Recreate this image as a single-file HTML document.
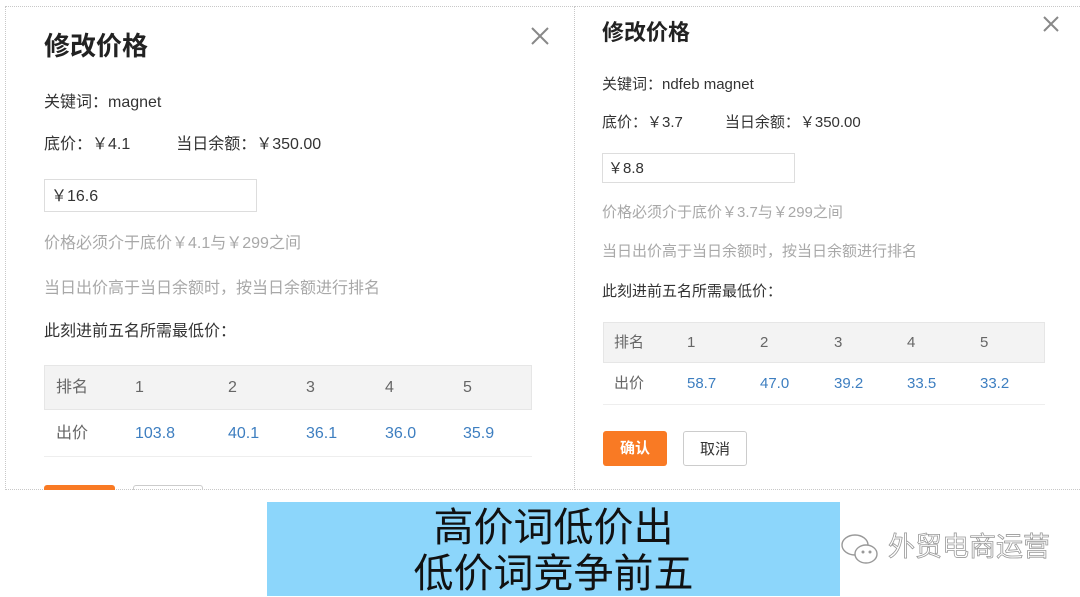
<!DOCTYPE html>
<html><head><meta charset="utf-8"><style>
*{margin:0;padding:0;box-sizing:border-box}
body{width:1080px;height:596px;background:#fff;position:relative;overflow:hidden;font-family:"Liberation Sans","Noto Sans CJK SC",sans-serif;color:#333}
.a{position:absolute;white-space:nowrap;line-height:1}
.g{color:#a8a8a8}
.b{color:#3d7ec0}
.panel{position:absolute;border:1px dotted #c8c8c8;overflow:hidden;background:#fff}
.x{position:absolute}
</style></head><body>
<div class="panel" style="left:5px;top:6px;width:570px;height:484px;border-right:none"></div>
<div class="panel" style="left:574px;top:6px;width:510px;height:484px;border-right:none"></div>

<!-- left -->
<div class="a" style="left:44px;top:33px;font-size:26px;font-weight:bold;color:#222">修改价格</div>
<svg class="x" style="left:530px;top:26px" width="20" height="20"><path d="M2 2L18 18M18 2L2 18" stroke="#888" stroke-width="2"/></svg>
<div class="a" style="left:44px;top:95px;font-size:16px">关键词：magnet</div>
<div class="a" style="left:44px;top:137px;font-size:16px">底价：￥4.1<span style="margin-left:46px">当日余额：￥350.00</span></div>
<div class="a" style="left:44px;top:179px;width:213px;height:33px;border:1px solid #ddd;font-size:16px;padding:9px 6px">￥16.6</div>
<div class="a g" style="left:44px;top:236px;font-size:16px">价格必须介于底价￥4.1与￥299之间</div>
<div class="a g" style="left:44px;top:281px;font-size:16px">当日出价高于当日余额时，按当日余额进行排名</div>
<div class="a" style="left:44px;top:324px;font-size:16px">此刻进前五名所需最低价：</div>
<div class="a" style="left:44px;top:365px;width:488px;height:45px;background:#f3f3f3;border:1px solid #e6e6e6"></div>
<div class="a" style="left:44px;top:456px;width:488px;height:1px;background:#eee"></div>
<div class="a" style="left:56px;top:380px;font-size:16px;color:#666">排名</div>
<div class="a" style="left:135px;top:380px;font-size:16px;color:#666">1</div>
<div class="a" style="left:228px;top:380px;font-size:16px;color:#666">2</div>
<div class="a" style="left:306px;top:380px;font-size:16px;color:#666">3</div>
<div class="a" style="left:385px;top:380px;font-size:16px;color:#666">4</div>
<div class="a" style="left:463px;top:380px;font-size:16px;color:#666">5</div>
<div class="a" style="left:56px;top:426px;font-size:16px;color:#666">出价</div>
<div class="a b" style="left:135px;top:426px;font-size:16px">103.8</div>
<div class="a b" style="left:228px;top:426px;font-size:16px">40.1</div>
<div class="a b" style="left:306px;top:426px;font-size:16px">36.1</div>
<div class="a b" style="left:385px;top:426px;font-size:16px">36.0</div>
<div class="a b" style="left:463px;top:426px;font-size:16px">35.9</div>
<div class="a" style="left:44px;top:485px;width:71px;height:5px;background:#f97a24;border-radius:3px 3px 0 0"></div>
<div class="a" style="left:133px;top:485px;width:70px;height:5px;border:1px solid #ccc;border-bottom:none;border-radius:3px 3px 0 0"></div>

<!-- right -->
<div class="a" style="left:602px;top:22px;font-size:22px;font-weight:bold;color:#222">修改价格</div>
<svg class="x" style="left:1042px;top:15px" width="18" height="18"><path d="M2 2L16 16M16 2L2 16" stroke="#888" stroke-width="2"/></svg>
<div class="a" style="left:602px;top:77px;font-size:15px">关键词：ndfeb magnet</div>
<div class="a" style="left:602px;top:115px;font-size:15px">底价：￥3.7<span style="margin-left:42px">当日余额：￥350.00</span></div>
<div class="a" style="left:602px;top:153px;width:193px;height:30px;border:1px solid #ddd;font-size:15px;padding:7px 5px">￥8.8</div>
<div class="a g" style="left:602px;top:205px;font-size:15px">价格必须介于底价￥3.7与￥299之间</div>
<div class="a g" style="left:602px;top:244px;font-size:15px">当日出价高于当日余额时，按当日余额进行排名</div>
<div class="a" style="left:602px;top:284px;font-size:15px">此刻进前五名所需最低价：</div>
<div class="a" style="left:603px;top:322px;width:442px;height:41px;background:#f3f3f3;border:1px solid #e6e6e6"></div>
<div class="a" style="left:603px;top:404px;width:442px;height:1px;background:#eee"></div>
<div class="a" style="left:614px;top:335px;font-size:15px;color:#666">排名</div>
<div class="a" style="left:687px;top:335px;font-size:15px;color:#666">1</div>
<div class="a" style="left:760px;top:335px;font-size:15px;color:#666">2</div>
<div class="a" style="left:834px;top:335px;font-size:15px;color:#666">3</div>
<div class="a" style="left:907px;top:335px;font-size:15px;color:#666">4</div>
<div class="a" style="left:980px;top:335px;font-size:15px;color:#666">5</div>
<div class="a" style="left:614px;top:376px;font-size:15px;color:#666">出价</div>
<div class="a b" style="left:687px;top:376px;font-size:15px">58.7</div>
<div class="a b" style="left:760px;top:376px;font-size:15px">47.0</div>
<div class="a b" style="left:834px;top:376px;font-size:15px">39.2</div>
<div class="a b" style="left:907px;top:376px;font-size:15px">33.5</div>
<div class="a b" style="left:980px;top:376px;font-size:15px">33.2</div>
<div class="a" style="left:603px;top:431px;width:64px;height:35px;background:#f97a24;border-radius:3px;color:#fff;font-size:15px;font-weight:bold;text-align:center;padding-top:10px">确认</div>
<div class="a" style="left:683px;top:431px;width:64px;height:35px;border:1px solid #ccc;border-radius:3px;font-size:15px;text-align:center;padding-top:10px">取消</div>

<!-- caption -->
<div class="a" style="left:267px;top:502px;width:573px;height:94px;background:#8cd6fb"></div>
<div class="a" style="left:267px;top:505px;width:573px;text-align:center;font-size:40px;line-height:46px;color:#111;white-space:normal">高价词低价出<br>低价词竞争前五</div>

<!-- watermark -->
<svg class="x" style="left:838px;top:530px" width="46" height="38"><g fill="none" stroke="#999" stroke-width="1.4"><ellipse cx="17" cy="15" rx="13" ry="10"/><ellipse cx="28" cy="24" rx="11" ry="9" fill="#fff"/></g><circle cx="25" cy="22" r="1.5" fill="#999"/><circle cx="32" cy="22" r="1.5" fill="#999"/></svg>
<div class="a" style="left:888px;top:534px;font-size:27px;color:#fff;-webkit-text-stroke:0.8px #999">外贸电商运营</div>
</body></html>
